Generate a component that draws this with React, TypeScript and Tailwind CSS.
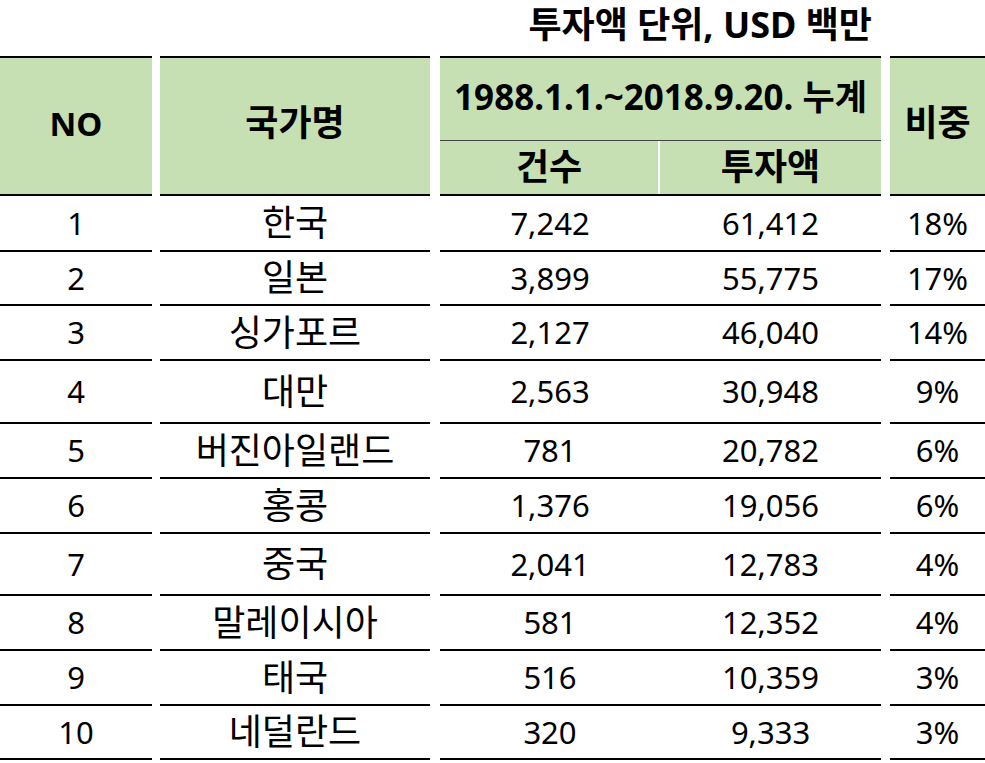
const rows = [
  { no: "1", name: "한국", count: "7,242", amount: "61,412", share: "18%", h: "h-[56px]" },
  { no: "2", name: "일본", count: "3,899", amount: "55,775", share: "17%", h: "h-[54px]" },
  { no: "3", name: "싱가포르", count: "2,127", amount: "46,040", share: "14%", h: "h-[55px]" },
  { no: "4", name: "대만", count: "2,563", amount: "30,948", share: "9%", h: "h-[63px]" },
  { no: "5", name: "버진아일랜드", count: "781", amount: "20,782", share: "6%", h: "h-[55px]" },
  { no: "6", name: "홍콩", count: "1,376", amount: "19,056", share: "6%", h: "h-[55px]" },
  { no: "7", name: "중국", count: "2,041", amount: "12,783", share: "4%", h: "h-[62px]" },
  { no: "8", name: "말레이시아", count: "581", amount: "12,352", share: "4%", h: "h-[55px]" },
  { no: "9", name: "태국", count: "516", amount: "10,359", share: "3%", h: "h-[55px]" },
  { no: "10", name: "네덜란드", count: "320", amount: "9,333", share: "3%", h: "h-[54px]" },
];

const font = "font-['Noto_Sans','Noto_Sans_CJK_KR',sans-serif]";
const cell = "flex items-center justify-center border-b-2 border-black";

export default function App() {
  return (
    <div className={`w-[985px] h-[763px] bg-white text-black ${font}`}>
      {/* Unit caption */}
      <div className="h-[56px] flex items-center justify-end pr-[113px] pb-[6px] text-[36px] font-bold leading-none">
        투자액 단위, USD 백만
      </div>

      {/* Header */}
      <div className="flex h-[140px] font-bold leading-none">
        <div className="w-[152px] flex items-center justify-center pb-[6px] bg-[#c6e0b4] border-y-2 border-black text-[33px]">
          NO
        </div>
        <div className="ml-[8px] w-[270px] flex items-center justify-center pb-[6px] bg-[#c6e0b4] border-y-2 border-black text-[36px]">
          국가명
        </div>
        <div className="ml-[10px] w-[441px] flex flex-col border-y-2 border-black bg-[#c6e0b4]">
          <div className="h-[83px] flex items-center justify-center pb-[6px] border-b border-[#444] text-[35px]">
            1988.1.1.~2018.9.20. 누계
          </div>
          <div className="flex-1 flex text-[36px]">
            <div className="w-[220px] flex items-center justify-center pb-[2px] border-r-2 border-white">건수</div>
            <div className="flex-1 flex items-center justify-center pb-[2px]">투자액</div>
          </div>
        </div>
        <div className="ml-[9px] w-[95px] flex items-center justify-center pb-[6px] bg-[#c6e0b4] border-y-2 border-black text-[36px]">
          비중
        </div>
      </div>

      {/* Body */}
      {rows.map((r) => (
        <div key={r.no} className={`flex ${r.h} leading-none`}>
          <div className={`w-[152px] ${cell} text-[31px]`}>{r.no}</div>
          <div className={`ml-[8px] w-[270px] ${cell} text-[36px]`}>{r.name}</div>
          <div className="ml-[10px] w-[441px] flex border-b-2 border-black text-[31px]">
            <div className="w-[220px] flex items-center justify-center">{r.count}</div>
            <div className="flex-1 flex items-center justify-center">{r.amount}</div>
          </div>
          <div className={`ml-[9px] w-[95px] ${cell} text-[31px]`}>{r.share}</div>
        </div>
      ))}
    </div>
  );
}
